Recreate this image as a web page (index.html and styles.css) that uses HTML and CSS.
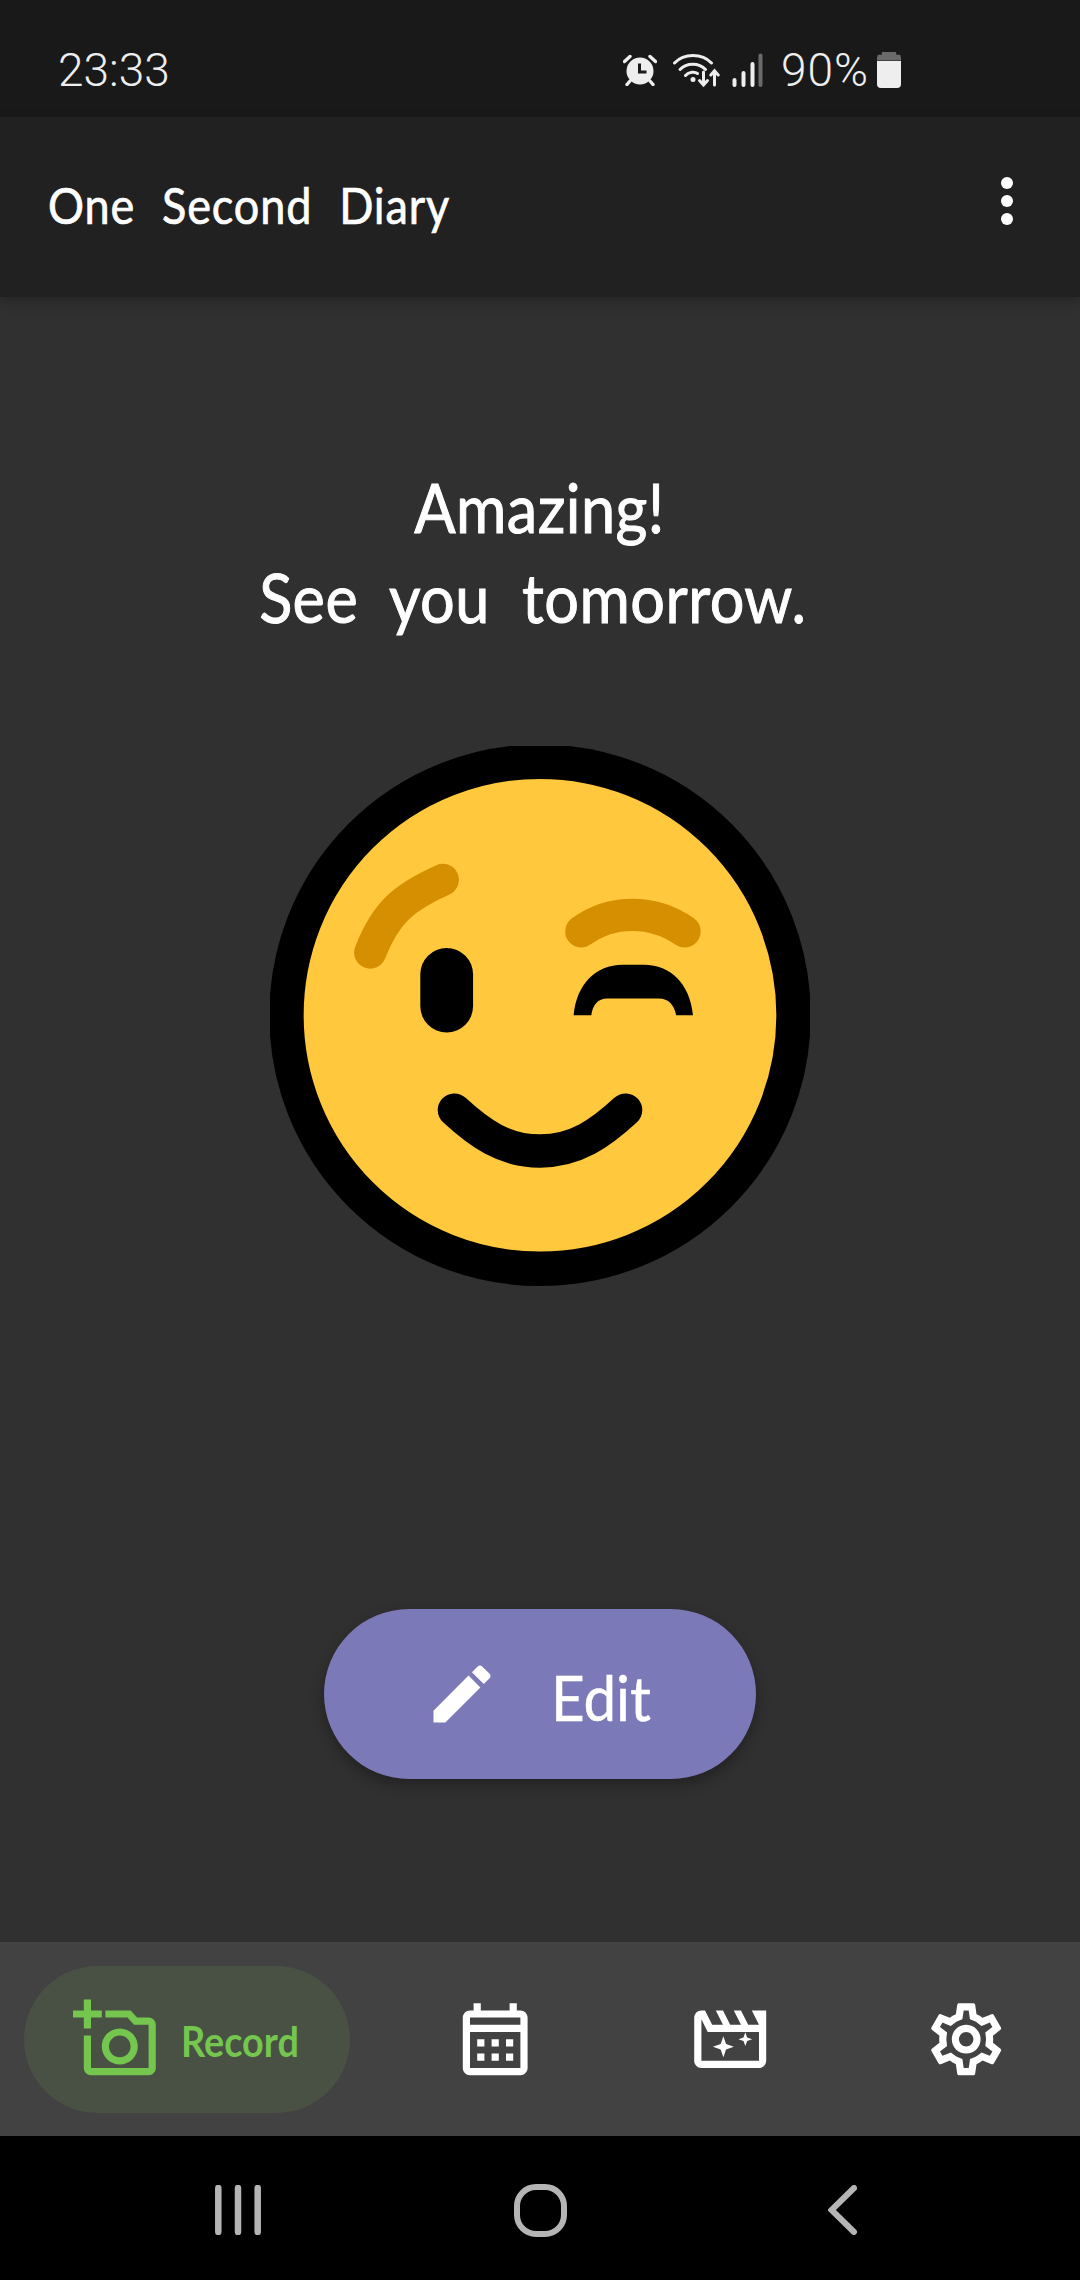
FILE: index.html
```html
<!DOCTYPE html>
<html lang="en">
<head>
  <meta charset="UTF-8" />
  <meta name="viewport" content="width=device-width, initial-scale=1.0">
  <title>One Second Diary</title>
  <link rel="stylesheet" href="styles.css">
</head>
<body>
  <div class="status-bar">
    <span class="clock">23:33</span>
    <div class="status-icons">
      <svg class="ic-alarm" viewBox="0 0 34 32" width="34" height="32">
        <circle cx="17" cy="17" r="13.5" fill="#eee"/>
        <path d="M1.5 7.5 7 2.5M32.5 7.5 27 2.5M7 27l-3 3.5M27 27l3 3.5" stroke="#eee" stroke-width="3.4" stroke-linecap="round" fill="none"/>
        <path d="M16.5 9.5v8.5h7" stroke="#191919" stroke-width="3" fill="none"/>
      </svg>
      <svg class="ic-wifi" viewBox="0 0 47 36" width="47" height="36">
        <g fill="none" stroke="#eee" stroke-width="3" stroke-linecap="round">
          <path d="M1.5 11C11 1 29 1 38.500 11"/>
          <path d="M7 17.500C13.500 10.500 26 10.500 32.500 17.500"/>
          <path d="M12.500 23.500C16 19.500 22 19.500 24.500 21.500"/>
          <path d="M30.500 20v13M26.500 28.500l4 4.500 4-4.500"/>
          <path d="M41.500 33V19M37.800 23l3.700-4.200 3.700 4.200"/>
        </g>
        <circle cx="20" cy="27.500" r="2.500" fill="#eee"/>
      </svg>
      <svg class="ic-signal" viewBox="0 0 31 34" width="31" height="34">
        <g fill="none" stroke-width="4" stroke-linecap="round">
          <path d="M2.500 27v5M11.500 20v12M20.500 11v21" stroke="#eee"/>
          <path d="M28.500 2.500V32" stroke="#6a6a6a"/>
        </g>
      </svg>
      <span class="battery-text">90%</span>
      <div class="battery"><div class="battery-cap"></div><div class="battery-level"></div></div>
    </div>
  </div>

  <header class="app-bar">
    <span class="app-title">One Second Diary</span>
    <div class="overflow-menu"><i></i><i></i><i></i></div>
  </header>

  <main class="content">
    <h1 class="done-text">Amazing!<span class="done-line">See you tomorrow.</span></h1>
    <svg class="emoji" viewBox="78 68 1412 1412" width="540" height="540">
      <circle cx="784" cy="772" r="663" fill="#ffc83d" stroke="#000" stroke-width="90"/>
      <g fill="none" stroke-linecap="round">
        <path d="M340 608C380 505 425 465 530 418" stroke="#d68f00" stroke-width="84"/>
        <path d="M892 553C970 495 1080 495 1162 553" stroke="#d68f00" stroke-width="84"/>
        <path d="M560 1020C625 1080 690 1127 784 1127C878 1127 943 1080 1008 1020" stroke="#000" stroke-width="87"/>
      </g>
      <rect x="471" y="596" width="138" height="221" rx="69"/>
      <path d="M872 772C880 690 930 640 1000 640H1056C1126 640 1176 690 1184 772H1140C1135 745 1120 728 1095 728H960C935 728 922 745 918 772Z"/>
    </svg>
    <button class="edit-btn" type="button">
      <svg viewBox="0 0 24 24" width="76" height="76" fill="#fff"><path d="M3 17.250V21h3.750L17.810 9.940l-3.750-3.750L3 17.250zM20.710 7.040c.39-.39.39-1.020 0-1.410l-2.340-2.340c-.39-.39-1.020-.39-1.410 0l-1.830 1.830 3.750 3.750 1.830-1.830z"/></svg>
      <span>Edit</span>
    </button>
  </main>

  <nav class="bottom-nav">
    <div class="nav-active">
      <svg viewBox="0 0 24 24" width="86.400" height="86.400" fill="#74c64f"><path d="M21 6h-3.170L16 4H9v2h6.120l1.830 2H21v12H5v-9H3v9c0 1.100.9 2 2 2h16c1.100 0 2-.9 2-2V8c0-1.100-.9-2-2-2zM8 14c0 2.760 2.240 5 5 5s5-2.240 5-5-2.240-5-5-5-5 2.240-5 5zm5-3c1.650 0 3 1.350 3 3s-1.350 3-3 3-3-1.350-3-3 1.350-3 3-3zM5 6h3V4H5V1H3v3H0v2h3v3h2z"/></svg>
      <span class="nav-label">Record</span>
    </div>
    <div class="nav-items">
      <svg viewBox="0 0 24 24" width="86.400" height="86.400" fill="#fff"><path d="M19 4h-1V2h-2v2H8V2H6v2H5c-1.100 0-2 .9-2 2v14c0 1.100.9 2 2 2h14c1.100 0 2-.9 2-2V6c0-1.100-.9-2-2-2zm0 16H5V10h14v10zm0-12H5V6h14v2zM9 14H7v-2h2v2zm4 0h-2v-2h2v2zm4 0h-2v-2h2v2zm-8 4H7v-2h2v2zm4 0h-2v-2h2v2zm4 0h-2v-2h2v2z"/></svg>
      <svg viewBox="0 0 24 24" width="86.400" height="86.400" fill="#fff"><path d="M4 6.470L5.760 10H20v8H4V6.470M22 4h-4l2 4h-3l-2-4h-2l2 4h-3L10 4H8l2 4H7L5 4H4c-1.100 0-1.990.9-1.990 2L2 18c0 1.100.9 2 2 2h16c1.100 0 2-.9 2-2V4z"/><path d="M10.100 11.200l.75 2.150 2.150.75-2.150.75-.75 2.150-.75-2.150-2.150-.75 2.150-.75zM16.200 10.100l.5 1.400 1.400.5-1.400.5-.5 1.400-.5-1.400-1.400-.5 1.400-.5z"/></svg>
      <svg viewBox="0 0 24 24" width="86.400" height="86.400" fill="#fff"><path d="M19.430 12.980c.04-.32.07-.64.07-.98 0-.34-.03-.66-.07-.98l2.110-1.650c.19-.15.24-.42.12-.64l-2-3.460c-.09-.16-.26-.25-.44-.25-.06 0-.12.01-.17.03l-2.490 1c-.52-.4-1.080-.73-1.690-.98l-.38-2.650C14.460 2.180 14.250 2 14 2h-4c-.25 0-.46.18-.49.42l-.38 2.650c-.61.25-1.170.59-1.690.98l-2.490-1c-.06-.02-.12-.03-.18-.03-.17 0-.34.09-.43.25l-2 3.460c-.13.22-.07.49.12.64l2.110 1.650c-.04.32-.07.65-.07.98 0 .33.03.66.07.98l-2.110 1.650c-.19.15-.24.42-.12.64l2 3.460c.09.16.26.25.44.25.06 0 .12-.01.17-.03l2.490-1c.52.4 1.080.73 1.690.98l.38 2.650c.03.24.24.42.49.42h4c.25 0 .46-.18.49-.42l.38-2.650c.61-.25 1.170-.59 1.690-.98l2.490 1c.06.02.12.03.18.03.17 0 .34-.09.43-.25l2-3.460c.12-.22.07-.49-.12-.64l-2.110-1.650zm-1.980-1.710c.04.31.05.52.05.73 0 .21-.02.43-.05.73l-.14 1.130.89.7 1.080.84-.7 1.210-1.270-.51-1.040-.42-.9.68c-.43.32-.84.56-1.250.73l-1.060.43-.16 1.130-.2 1.350h-1.400l-.19-1.350-.16-1.130-1.060-.43c-.43-.18-.83-.41-1.230-.71l-.91-.7-1.060.43-1.270.51-.7-1.210 1.080-.84.89-.7-.14-1.130c-.03-.31-.05-.54-.05-.74s.02-.43.05-.73l.14-1.130-.89-.7-1.080-.84.7-1.210 1.270.51 1.040.42.9-.68c.43-.32.84-.56 1.250-.73l1.060-.43.16-1.130.2-1.350h1.390l.19 1.350.16 1.130 1.060.43c.43.18.83.41 1.230.71l.91.7 1.060-.43 1.270-.51.7 1.210-1.070.85-.89.7.14 1.130zM12 8c-2.210 0-4 1.790-4 4s1.790 4 4 4 4-1.790 4-4-1.790-4-4-4zm0 6c-1.100 0-2-.9-2-2s.9-2 2-2 2 .9 2 2-.9 2-2 2z"/></svg>
    </div>
  </nav>

  <div class="system-nav">
    <svg viewBox="0 0 46 50" width="46" height="50"><path d="M3.300 3v44M23 3v44M42.700 3v44" stroke="#b5b5b5" stroke-width="6.500" stroke-linecap="round" fill="none"/></svg>
    <div class="home-btn"></div>
    <svg viewBox="0 0 29 50" width="29" height="50"><path d="M26 3 3.500 25 26 47" stroke="#b5b5b5" stroke-width="6" stroke-linecap="round" stroke-linejoin="miter" fill="none"/></svg>
  </div>
</body>
</html>
```

FILE: styles.css
```css
* {
  box-sizing: border-box;
}
body {
  margin: 0;
  width: 1080px;
  height: 2280px;
  display: flex;
  flex-direction: column;
  overflow: hidden;
  background: #303030;
  font-family: Lato, sans-serif;
  color: #fff;
}

/* status bar */
.status-bar {
  height: 117px;
  flex: none;
  background: #191919;
  display: flex;
  align-items: center;
  padding: 22px 179px 0 58px;
  justify-content: space-between;
  color: #eee;
  font-family: Roboto, sans-serif;
  font-weight: 300;
}
.clock {
  font-size: 46px;
}
.status-icons {
  display: flex;
  align-items: center;
}
.ic-wifi {
  margin-left: 16px;
}
.ic-signal {
  margin-left: 12px;
}
.battery-text {
  font-size: 46px;
  margin-left: 18px;
  letter-spacing: 1px;
}
.battery {
  margin-left: 8px;
  width: 24px;
  height: 36px;
}
.battery-cap {
  width: 24px;
  height: 9px;
  background: #6a6a6a;
  border-radius: 6px 6px 0 0;
  clip-path: polygon(20% 0, 80% 0, 80% 35%, 100% 35%, 100% 100%, 0 100%, 0 35%, 20% 35%);
}
.battery-level {
  width: 24px;
  height: 27px;
  background: #eee;
  border-radius: 0 0 4px 4px;
}

/* app bar */
.app-bar {
  height: 180px;
  flex: none;
  background: #212121;
  display: flex;
  align-items: center;
  justify-content: space-between;
  padding: 0 67px 0 48px;
  box-shadow: 0 4px 12px rgba(0, 0, 0, 0.25);
  position: relative;
}
/* no narrow font installed, so the app's hand font is squeezed from Lato */
.app-title {
  font-size: 50px;
  letter-spacing: 1px;
  word-spacing: 16px;
  margin-top: -5px;
  transform: scaleX(0.9);
  transform-origin: left center;
  -webkit-text-stroke: 0.7px #fff;
}
.overflow-menu {
  display: flex;
  flex-direction: column;
  gap: 6px;
  margin-top: -12px;
}
.overflow-menu i {
  display: block;
  width: 12px;
  height: 12px;
  border-radius: 50%;
  background: #fff;
}

/* main content */
.content {
  flex: 1;
  display: flex;
  flex-direction: column;
  align-items: center;
}
.done-text {
  margin: 165px 0 0;
  font-size: 68px;
  line-height: 90px;
  font-weight: 400;
  text-align: center;
  letter-spacing: 0.5px;
  word-spacing: 18px;
  transform: scaleX(0.9);
  -webkit-text-stroke: 1px #fff;
}
.done-line {
  display: block;
  padding-right: 15px;
}
.emoji {
  margin-top: 104px;
  display: block;
}
.edit-btn {
  margin-top: 323px;
  width: 432px;
  height: 170px;
  border: none;
  border-radius: 85px;
  background: #7c79b8;
  color: #fff;
  display: flex;
  align-items: center;
  padding: 0 0 0 100px;
  box-shadow: 0 6px 14px rgba(0, 0, 0, 0.3);
  font-family: Lato, sans-serif;
  font-size: 62px;
}
.edit-btn span {
  margin-left: 51px;
  padding-top: 6px;
  transform: scaleX(0.94);
  transform-origin: left center;
  -webkit-text-stroke: 0.5px #fff;
}

/* bottom nav */
.bottom-nav {
  height: 194px;
  flex: none;
  background: #424242;
  display: flex;
  align-items: center;
  padding-left: 24px;
}
.nav-active {
  width: 326px;
  height: 147px;
  border-radius: 74px;
  background: #495044;
  display: flex;
  align-items: center;
  padding-left: 49px;
}
.nav-label {
  margin-left: 22px;
  padding-top: 4px;
  color: #74c64f;
  font-size: 42px;
  font-weight: 700;
  transform: scaleX(0.9);
  transform-origin: left center;
}
.nav-items {
  margin-left: 102px;
  display: flex;
  gap: 149px;
}

/* android nav */
.system-nav {
  height: 144px;
  flex: none;
  background: #000;
  display: flex;
  align-items: center;
  justify-content: space-between;
  padding: 4px 223px 0 215px;
}
.home-btn {
  width: 53px;
  height: 53px;
  border: 6.500px solid #b5b5b5;
  border-radius: 22px;
  margin-right: 8px;
}
```
